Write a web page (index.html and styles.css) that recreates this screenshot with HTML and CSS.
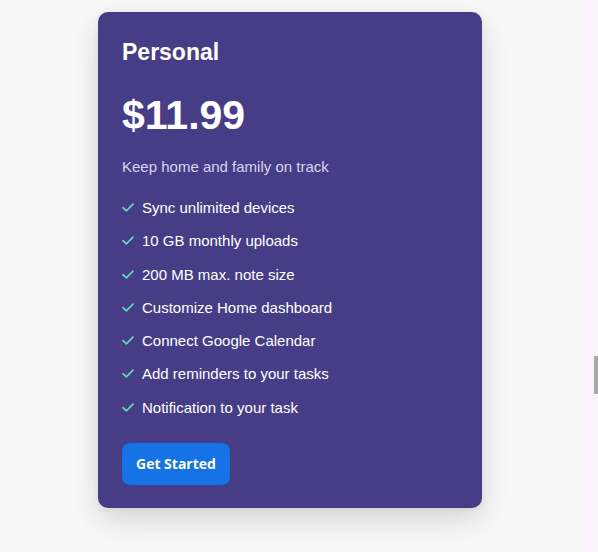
FILE: index.html
```html
<!DOCTYPE html>
<html lang="en">
<head>
<meta charset="utf-8">
<title>Personal plan</title>
<link rel="stylesheet" href="styles.css">
</head>
<body>
<div class="page">
  <main class="stage">
    <section class="card">
      <h2 class="plan">Personal</h2>
      <div class="price">$11.99</div>
      <p class="desc">Keep home and family on track</p>
      <ul class="features">
        <li><svg class="check" viewBox="0 0 12 9" width="12" height="9"><path d="M1 4.6 L4.3 7.8 L11 1.2" fill="none" stroke="currentColor" stroke-width="1.7" stroke-linecap="round" stroke-linejoin="round"/></svg>Sync unlimited devices</li>
        <li><svg class="check" viewBox="0 0 12 9" width="12" height="9"><path d="M1 4.6 L4.3 7.8 L11 1.2" fill="none" stroke="currentColor" stroke-width="1.7" stroke-linecap="round" stroke-linejoin="round"/></svg>10 GB monthly uploads</li>
        <li><svg class="check" viewBox="0 0 12 9" width="12" height="9"><path d="M1 4.6 L4.3 7.8 L11 1.2" fill="none" stroke="currentColor" stroke-width="1.7" stroke-linecap="round" stroke-linejoin="round"/></svg>200 MB max. note size</li>
        <li><svg class="check" viewBox="0 0 12 9" width="12" height="9"><path d="M1 4.6 L4.3 7.8 L11 1.2" fill="none" stroke="currentColor" stroke-width="1.7" stroke-linecap="round" stroke-linejoin="round"/></svg>Customize Home dashboard</li>
        <li><svg class="check" viewBox="0 0 12 9" width="12" height="9"><path d="M1 4.6 L4.3 7.8 L11 1.2" fill="none" stroke="currentColor" stroke-width="1.7" stroke-linecap="round" stroke-linejoin="round"/></svg>Connect Google Calendar</li>
        <li><svg class="check" viewBox="0 0 12 9" width="12" height="9"><path d="M1 4.6 L4.3 7.8 L11 1.2" fill="none" stroke="currentColor" stroke-width="1.7" stroke-linecap="round" stroke-linejoin="round"/></svg>Add reminders to your tasks</li>
        <li><svg class="check" viewBox="0 0 12 9" width="12" height="9"><path d="M1 4.6 L4.3 7.8 L11 1.2" fill="none" stroke="currentColor" stroke-width="1.7" stroke-linecap="round" stroke-linejoin="round"/></svg>Notification to your task</li>
      </ul>
      <button class="cta" type="button">Get Started</button>
    </section>
  </main>
  <div class="rail"><span class="thumb"></span></div>
</div>
</body>
</html>
```

FILE: styles.css
```css
* { box-sizing: border-box; }
html, body { margin: 0; padding: 0; }
body {
  background: #faf3fa;
  font-family: "Liberation Sans", Arial, sans-serif;
  overflow: hidden;
}
.page {
  display: flex;
  width: 598px;
  height: 552px;
}
.stage {
  width: 584px;
  height: 552px;
  background: #f8f8f8;
  padding: 12px 0 0 98px;
}
.card {
  width: 384px;
  height: 496px;
  background: #463d86;
  border-radius: 10px;
  padding: 26px 24px 22px 24px;
  box-shadow: 0 12px 30px rgba(0, 0, 0, 0.14), 0 2px 8px rgba(0, 0, 0, 0.05);
  color: #ffffff;
  display: flex;
  flex-direction: column;
  align-items: flex-start;
}
.plan {
  margin: 0;
  font-size: 23px;
  line-height: 28px;
  font-weight: 700;
}
.price {
  margin-top: 25px;
  font-size: 41px;
  line-height: 48px;
  font-weight: 700;
}
.desc {
  margin: 19px 0 0 0;
  font-size: 15px;
  line-height: 18px;
  color: #d8d4ee;
}
.features {
  list-style: none;
  margin: 23px 0 0 0;
  padding: 0;
  display: flex;
  flex-direction: column;
  gap: 16px;
}
.features li {
  display: flex;
  align-items: center;
  gap: 8px;
  font-size: 15px;
  line-height: 17.25px;
}
.check {
  color: #5fdcb6;
  flex: none;
}
.cta {
  margin-top: 27px;
  height: 42px;
  padding: 0 14px;
  border: 0;
  border-radius: 8px;
  background: #1673e6;
  color: #ffffff;
  font-family: "Open Sans", sans-serif;
  font-weight: 700;
  font-size: 14px;
}
.rail {
  width: 14px;
  height: 552px;
  position: relative;
}
.thumb {
  position: absolute;
  left: 10px;
  top: 356px;
  width: 4px;
  height: 38px;
  background: #a9a9a9;
}
```
